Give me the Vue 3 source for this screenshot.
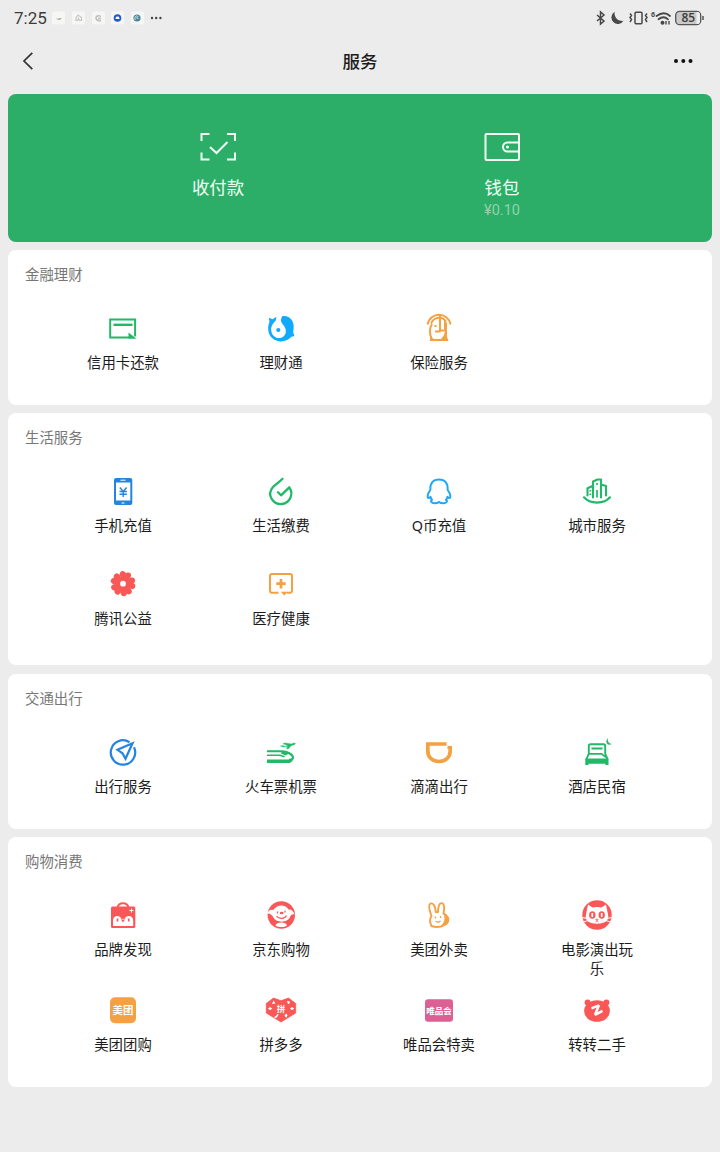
<template>
  <div class="page">
    <!-- 状态栏 -->
    <div class="status-bar">
      <span class="time">7:25</span>
      <svg class="notice" width="112" height="16" viewBox="0 0 112 16">
        <g fill="#f6f6f5">
          <rect x="1" y="1.5" width="13" height="13" rx="2" />
          <rect x="21" y="1.5" width="13" height="13" rx="2" />
          <rect x="41" y="1.5" width="13" height="13" rx="2" />
          <rect x="60" y="1.5" width="13" height="13" rx="2" />
          <rect x="80" y="1.5" width="13" height="13" rx="2" />
        </g>
        <path d="M4.500 8l2.500.7 1-.7h3l-2 2H7z" fill="#b5b3ad" />
        <path d="M25 10.500V8l2-3 3.500 2.500v3h-2l-1-2-1 2z" fill="none" stroke="#c6c6c6" stroke-width="1.200" />
        <path d="M50 6.500c-3-2-5.500 0-5 2s3 2.500 5 2M47 8.500h3" fill="none" stroke="#bdbdbd" stroke-width="1.500" />
        <circle cx="66.500" cy="8" r="3.800" fill="#2459c5" />
        <path d="M64.500 9c0-2 1-2.500 2-2.500s2 .5 2 2.500z" fill="#fff" />
        <circle cx="86" cy="8" r="3.600" fill="#4b8799" />
        <path d="M84 10V7q1.500-2 3-.5L85.500 8l2 .5" fill="none" stroke="#b9dde2" stroke-width="1" />
        <g fill="#444">
          <circle cx="101" cy="8" r="1.200" /><circle cx="105.200" cy="8" r="1.200" /><circle cx="109.400" cy="8" r="1.200" />
        </g>
      </svg>
      <svg class="system" width="114" height="18" viewBox="0 0 114 18">
        <g fill="none" stroke="#484848" stroke-width="1.500">
          <path d="M5 6l7 6-3.500 3v-12L12 6l-7 6" />
          <rect x="43" y="3.200" width="7" height="11.600" rx="1" />
          <path d="M38 4.500l1.500 2-1.500 2 1.500 2-1.500 2.500M55 4.500l-1.500 2 1.500 2-1.500 2 1.500 2.500" />
          <path d="M64.500 7q7.500-5.500 13.500 0M66.500 10.300q5-4 9.500 0" stroke-width="1.800" stroke-linecap="round" />
        </g>
        <path d="M22.700 2.800A6.500 6.500 0 1 0 31.500 11.800A7.600 7.600 0 0 1 22.700 2.800z" fill="#484848" />
        <g fill="#484848">
          <circle cx="70.500" cy="13.700" r="2" />
          <path d="M74 12v3.500M77 12v3.500" stroke="#484848" stroke-width="1.400" />
          <text x="59" y="7.500" font-size="7" font-weight="700">6</text>
        </g>
        <rect x="83.700" y="2.300" width="25" height="13.400" rx="4" fill="#c9c9c9" stroke="#555" stroke-width="1.300" />
        <path d="M104.500 3h1.200q2.300 0 2.300 3v6q0 3-2.300 3h-1.200z" fill="#eee" />
        <path d="M111 7v4" stroke="#555" stroke-width="1.500" />
        <text class="battery" x="96.300" y="13.300" font-size="12" font-weight="600" text-anchor="middle" fill="#3c3c3c">85</text>
      </svg>
    </div>

    <!-- 导航栏 -->
    <div class="nav-bar">
      <svg width="36" height="24" viewBox="0 0 36 24"><path d="M24.300 3.800L16 12l8.300 8.200" fill="none" stroke="#333" stroke-width="1.700" /></svg>
      <h1>服务</h1>
      <svg width="40" height="24" viewBox="0 0 40 24" fill="#111">
        <circle cx="4" cy="12" r="2" /><circle cx="11.300" cy="12" r="2" /><circle cx="18.500" cy="12" r="2" />
      </svg>
    </div>

    <!-- 收付款 / 钱包 -->
    <div class="pay-card">
      <div class="pay-item">
        <svg width="40" height="36" viewBox="0 0 40 36" fill="none" stroke="#f2fff5" stroke-width="2">
          <path d="M3.500 12v-7h8M29 5h8v7M37 23.500v7h-8M11.500 30.500h-8v-7M12 18l6.500 6L29.500 13" />
        </svg>
        <div class="pay-name">收付款</div>
      </div>
      <div class="pay-item">
        <svg width="40" height="36" viewBox="0 0 40 36" fill="none" stroke="#f2fff5" stroke-width="2">
          <rect x="3.500" y="5" width="33.500" height="26" rx="1" />
          <path d="M37 13.500H25.500a4.500 4.500 0 0 0 0 9H37" />
          <circle cx="25.500" cy="18" r="1.600" fill="#f2fff5" stroke="none" />
        </svg>
        <div class="pay-name">钱包</div>
        <div class="balance">¥0.10</div>
      </div>
    </div>

    <!-- 服务分组 -->
    <section v-for="group in groups" :key="group.title" class="card" :class="group.size">
      <h2>{{ group.title }}</h2>
      <div class="grid">
        <div v-for="item in group.items" :key="item.name" class="item">
          <svg width="36" height="36" viewBox="0 0 36 36" fill="none" v-html="item.icon"></svg>
          <div class="name">{{ item.name }}</div>
        </div>
      </div>
    </section>
  </div>
</template>

<script setup>
const green = '#20b968'
const blue = '#2484e0'
const sky = '#10aaff'
const orange = '#f5a041'
const red = '#fa5757'

// 腾讯公益的花瓣
const petals = [15, 87, 159, 231, 303]
  .map((deg) => `<g transform="rotate(${deg} 18 17.700)"><circle cx="15.300" cy="8.500" r="3"/><circle cx="20.700" cy="8.500" r="3"/><path d="M12.500 9.500L16 17h4l3.500-7.500L18 7.500z"/></g>`)
  .join('')

const groups = [
  {
    title: '金融理财',
    size: 'one',
    items: [
      {
        name: '信用卡还款',
        icon: `<path d="M24 27.500H5.200v-18h24.900v17" stroke="${green}" stroke-width="2"/><path d="M8.500 14.800h19" stroke="${green}" stroke-width="2.400"/><path d="M23.500 22.500l8 6.200h-8z" fill="${green}"/>`,
      },
      {
        name: '理财通',
        icon: `<path d="M19.500 6C27 5 31.500 11.500 30.600 18c0 2-.5 3.500-.4 4.500l1.300 3.500-3 .8C21 35 6 32 5.200 19.500c-.2-3.500.5-5.500 1.300-7.500l-.7-4.300 3.700 1.500 4-2.500-.8 4C9 14 7.800 17 8.300 21c1.500 9.500 13.500 9 14.500 1 .5-5-3-7-4.300-9.500-1-2.300-.5-4.500 1-6.500z" fill="${sky}"/><circle cx="15.300" cy="20" r="2.100" fill="${sky}"/>`,
      },
      {
        name: '保险服务',
        icon: `<path d="M6.500 14.500C9 1.500 27 1.500 29.700 14.500M10 13.500c3-6.500 11-8 15-2" stroke="${orange}" stroke-width="1.900"/><path d="M11 14c-2.500 4-2.500 10-.2 15" stroke="${orange}" stroke-width="2"/><path d="M9 27v4h18.500L26 27V13l-3-3v9c1.500 4 0 7-3 10h-7z" fill="${orange}"/><path d="M19 5v15.500h4.500M14 21.500h5.500M13.500 16h2" stroke="${orange}" stroke-width="2"/>`,
      },
    ],
  },
  {
    title: '生活服务',
    size: 'two',
    items: [
      {
        name: '手机充值',
        icon: `<rect x="9" y="5" width="18.300" height="27" rx="2" fill="${blue}"/><path d="M11 9.500h14.300v18H11z" fill="#fff"/><path d="M15.500 7.200h5M16.500 30h3" stroke="#fff"/><path d="M14.800 14.500l3.400 4 3.400-4M18.200 18.500v5.500M14.500 18.500h7.400M14.500 21.200h7.400" stroke="${blue}" stroke-width="1.400"/>`,
      },
      {
        name: '生活缴费',
        icon: `<path d="M19.500 5.800C16 9.500 12.500 11.500 10 14c-7 8 .5 18 9 17 8-1 12-10 7.300-16.700l-8.300 8-3-3" stroke="${green}" stroke-width="2.300" stroke-linecap="round" stroke-linejoin="round"/>`,
      },
      {
        name: 'Q币充值',
        icon: `<path d="M9.300 17C9 10 12 6.500 18 6.500s9 3.500 8.700 10.500c1.500 2 3.200 4.500 2.500 7.500-.7 1-2 .2-2.700-.8-.3 1.500-.8 2.300-1.500 3 2 1.500.3 3.500-2.300 3.500-2 0-3.600-.3-4.700-1.300-1.100 1-2.700 1.300-4.700 1.300-2.600 0-4.300-2-2.300-3.500-.7-.7-1.200-1.500-1.500-3-.7 1-2 1.800-2.700.8-.7-3 1-5.500 2.500-7.500z" stroke="#22a7f5" stroke-width="2" stroke-linejoin="round"/>`,
      },
      {
        name: '城市服务',
        icon: `<path d="M5 24.300c6 7 20 7 26 0" stroke="${green}" stroke-width="2.200" stroke-linecap="round"/><path d="M8.500 22.500v-7.300l5.500-2.500V8.500l4.500-2H22v18M22 11.500l5 1.500v9.500M14 13v11.500" stroke="${green}" stroke-width="2.100" stroke-linecap="round" stroke-linejoin="round"/><path d="M18 10v2M11.300 17v1.500M11.300 20.500V22M18 17v7.500" stroke="${green}" stroke-width="1.700"/>`,
      },
      {
        name: '腾讯公益',
        icon: `<g fill="${red}">${petals}<circle cx="18" cy="17.700" r="6"/></g><circle cx="18" cy="17.700" r="2.900" fill="#fff"/>`,
      },
      {
        name: '医疗健康',
        icon: `<path d="M15.500 26.800H9a2 2 0 0 1-2-2V10a2 2 0 0 1 2-2h18a2 2 0 0 1 2 2v14.800a2 2 0 0 1-2 2h-3" stroke="${orange}" stroke-width="2"/><path d="M18 13v9.400M13.300 17.700h9.400" stroke="${orange}" stroke-width="2.700"/><path d="M17.800 25.800h7l-3.500 3.800z" fill="${orange}"/>`,
      },
    ],
  },
  {
    title: '交通出行',
    size: 'one',
    items: [
      {
        name: '出行服务',
        icon: `<path d="M24.500 8.200A12.200 12.200 0 1 0 29 13.300" stroke="${blue}" stroke-width="2.200"/><path d="M27.500 9.300l-15 6.500 5 3.500 3 5.500z" stroke="${blue}" stroke-width="2.200"/>`,
      },
      {
        name: '火车票机票',
        icon: `<path d="M4 17.300h15c5 0 11 3 11 6.500 0 1.500-2 2-4 2" stroke="${green}" stroke-width="2.100"/><path d="M4 21.300h13l4.500 1.500" stroke="${green}" stroke-width="1.600"/><path d="M4 25.500h23.500l2.800-2c0 3-1.800 5.500-4.800 5.500H4zM19 17l7 2.500-3.500 2-4.500-2z" fill="${green}"/><path d="M17.500 12l2.500-.4 2 .8 3-.9-5-1.700 2-.9 6.500 1 2.500-.9c1.700-.2 1.700 1.200.5 1.600l-3.500 1.200-2.500 3h-2l1.200-2.500-4 .8z" fill="${green}" stroke="${green}" stroke-width=".4"/>`,
      },
      {
        name: '滴滴出行',
        icon: `<path d="M25.500 10H6.800v6.700c0 7 5 10.800 11.200 10.800s11.200-3.800 11.200-10.800V13" stroke="${orange}" stroke-width="3.700"/><path d="M26.500 12H31v3h-4.500z" fill="${orange}"/>`,
      },
      {
        name: '酒店民宿',
        icon: `<path d="M7.300 25.500l2.500-6V12q0-1.700 1.700-1.700h13q1.700 0 1.700 1.700v7.500l2.500 6" stroke="${green}" stroke-width="1.900"/><path d="M12.500 14.500h11M9.500 19.800h13l4.500 3.500" stroke="${green}" stroke-width="1.800"/><path d="M6.300 24.500h23.200V31h-2.800l-.7-1.300H9.800L9.200 31H6.300z" fill="${green}"/><path d="M28.800 4c-3.500 4.500 0 8.300 4 6-3-.5-4.500-3-4-6z" fill="${green}"/>`,
      },
    ],
  },
  {
    title: '购物消费',
    size: 'two shopping',
    items: [
      {
        name: '品牌发现',
        icon: `<path d="M12.500 11c.5-6.500 10.500-6.500 11 0" stroke="${red}" stroke-width="2"/><rect x="6" y="9.500" width="24.300" height="21.500" rx="1.500" fill="${red}"/><path d="M8 29v-5c0-6.500 7.500-6 8.300-2q1.700-.7 3.400 0c.8-4 8.500-4.500 8.500 2v5z" fill="#fff"/><path d="M26.500 11.500v4M24.500 13.500h4" stroke="#fff"/><path d="M12.500 21.500v3M23.700 21.500v3" stroke="${red}" stroke-width="1.700"/><path d="M16 22.500h4l-2 3z" fill="${red}"/>`,
      },
      {
        name: '京东购物',
        icon: `<circle cx="18.300" cy="18" r="13.700" fill="${red}"/><path d="M4.300 16.500c.7-3 3.500-4.500 6-3.500 3-5.500 12-6.500 15.200-.5 3-.3 5 1.500 6 5-2.500-.5-3.500.5-4.500 2.500-2 5.500-13 6.500-16.500.8-1-2.800-3.500-4.500-6.200-4.300z" fill="#fff"/><path d="M12.500 28.500c.5-4 11-4 11.500 0-2.500 2-9 2-11.500 0z" fill="#fff"/><path d="M14.500 14.500v2M22 13.500v2M13.500 19c2.500 3.500 8.500 3 10-.5" stroke="${red}" stroke-width="1.200"/><ellipse cx="18.700" cy="16" rx="1.900" ry="1.200" fill="${red}"/>`,
      },
      {
        name: '美团外卖',
        icon: `<path d="M10.500 29c-1.500-3-2-7 0-10C9 15 6.500 8 9.500 6.500c3.500-1 4.800 3.500 5.200 8.500h2.300c0-4.500 1-9.300 4-8.800 3.500 1 2 7.500 1.500 10.500 5.500 2.500 6 9 1 11.300-3.500 2-9 2.500-13 1z" stroke="${orange}" stroke-width="1.900" stroke-linejoin="round"/><path d="M23 16.500c6 2.500 6.500 9 1 11.500l-4 1c4-3 5-8 3-12.500z" fill="${orange}" stroke="${orange}"/><path d="M14.500 19.500v2M19.500 19v2M14.500 24.300c2 1.300 4 .8 5-.5" stroke="${orange}" stroke-width="1.300"/>`,
      },
      {
        name: '电影演出玩乐',
        icon: `<circle cx="18" cy="18" r="14.700" fill="${red}"/><path d="M9 7.500l4.500 3q4.500-1 9 0l4.500-3 2 10c1.500 5.500-2.500 9.300-11 9.300S5.500 23 7 17.500z" fill="#fff"/><path d="M3 20.500l6 1.200M4.500 25l5.500-1.800M33 20.500l-6 1.200M31.500 25L26 23.200" stroke="#fff" stroke-width="1"/><ellipse cx="13.300" cy="18" rx="3.200" ry="3.800" fill="${red}"/><ellipse cx="22.700" cy="18" rx="3.200" ry="3.800" fill="${red}"/><path d="M13.300 16v4M22.700 16v4" stroke="#fff" stroke-width="1.700"/><path d="M16.800 22.300h2.400L18 23.800zM18 23.800l-1.500 1.300M18 23.800l1.500 1.300" stroke="${red}" stroke-width=".8"/>`,
      },
      {
        name: '美团团购',
        icon: `<rect x="5" y="5.200" width="26" height="26" rx="5" fill="${orange}"/><text x="18" y="22" font-size="10.500" font-weight="700" text-anchor="middle" fill="#fff">美团</text>`,
      },
      {
        name: '拼多多',
        icon: `<path d="M3.300 11.500L10.500 6 18 8.800 25.500 6l7.200 5.500V21L18 30 3.300 21z" fill="${red}" stroke="${red}" stroke-linejoin="round" stroke-width=".8"/><g fill="#fff"><path d="M9 12l1.500-3.500 2 3zM24 9l2.700.3v2l-1.700 1zM5 16.500l2-1.500 2.300 1.500L7 18.300zM27 16.500l2-1.500 2.300 1.500-2.300 1.800zM21.500 23l2-1.500 1 2-1.500 2.500z"/><path d="M11.500 25.500q3-.5 3.500-3.500" stroke="#fff" stroke-width="1.300"/></g><text x="18" y="20" font-size="8.500" font-weight="700" text-anchor="middle" fill="#fff">拼</text>`,
      },
      {
        name: '唯品会特卖',
        icon: `<rect x="4" y="7.300" width="28" height="22.400" rx="3" fill="#dd6095"/><text x="18" y="21.500" font-size="8.500" font-weight="700" text-anchor="middle" fill="#fff">唯品会</text>`,
      },
      {
        name: '转转二手',
        icon: `<g fill="${red}"><path d="M8 10h20v8H8z"/><ellipse cx="18" cy="19" rx="12.900" ry="10.800"/><circle cx="8.600" cy="10.600" r="3"/><circle cx="27.400" cy="10.600" r="3"/></g><path d="M12.500 16.300l7.500-3-4 9.500 7.500-4" stroke="#fff" stroke-width="2.500" stroke-linejoin="bevel"/>`,
      },
    ],
  },
]
</script>

<style>
body {
  margin: 0;
  background: #ececec;
}
</style>

<style scoped>
.page {
  box-sizing: border-box;
  width: 720px;
  height: 1152px;
  padding: 0 8px;
  overflow: hidden;
  background: #ececec;
  font-family: "Noto Sans", "Noto Sans CJK SC", sans-serif;
  color: #1c1c1c;
}
svg {
  display: block;
  flex: none;
}
.status-bar {
  display: flex;
  align-items: center;
  height: 36px;
  padding: 0 6px;
}
.time {
  width: 37px;
  font-family: Roboto, sans-serif;
  font-size: 17px;
  color: #3c3c3c;
}
.system {
  margin-left: auto;
}
.battery {
  font-family: "Open Sans", sans-serif;
}
.nav-bar {
  display: grid;
  grid-template-columns: 40px 1fr 40px;
  align-items: center;
  height: 50px;
  margin-bottom: 8px;
}
.nav-bar h1 {
  margin: -2px 0 0;
  font-size: 17.5px;
  font-weight: 500;
  text-align: center;
}
.pay-card {
  box-sizing: border-box;
  display: grid;
  grid-template-columns: 284px 284px;
  justify-content: center;
  height: 147.5px;
  padding-top: 35px;
  border-radius: 8px;
  background: #2dae68;
  color: #f2fff5;
}
.pay-item {
  display: flex;
  flex-direction: column;
  align-items: center;
}
.pay-name {
  margin-top: 10px;
  font-size: 17.4px;
  line-height: 24px;
}
.balance {
  margin-top: 2px;
  font-family: Roboto, sans-serif;
  font-size: 14.5px;
  line-height: 20px;
  color: #8fd3ab;
}
.card {
  box-sizing: border-box;
  margin-top: 8.3px;
  padding: 15px 36px 0;
  border-radius: 8px;
  background: #fff;
}
.one {
  height: 155px;
}
.two {
  height: 252.3px;
}
.shopping {
  height: 250.5px;
}
.card h2 {
  margin: 0 0 0 -19px;
  font-size: 14.4px;
  line-height: 20px;
  font-weight: 400;
  color: #777;
}
.grid {
  display: grid;
  grid-template-columns: repeat(4, 158px);
  grid-auto-rows: 93px;
  padding-top: 25px;
}
.shopping .grid {
  grid-auto-rows: 95px;
}
.item {
  display: flex;
  flex-direction: column;
  align-items: center;
}
.name {
  width: 74px;
  margin-top: 7px;
  font-size: 14.4px;
  line-height: 19px;
  text-align: center;
}
</style>
